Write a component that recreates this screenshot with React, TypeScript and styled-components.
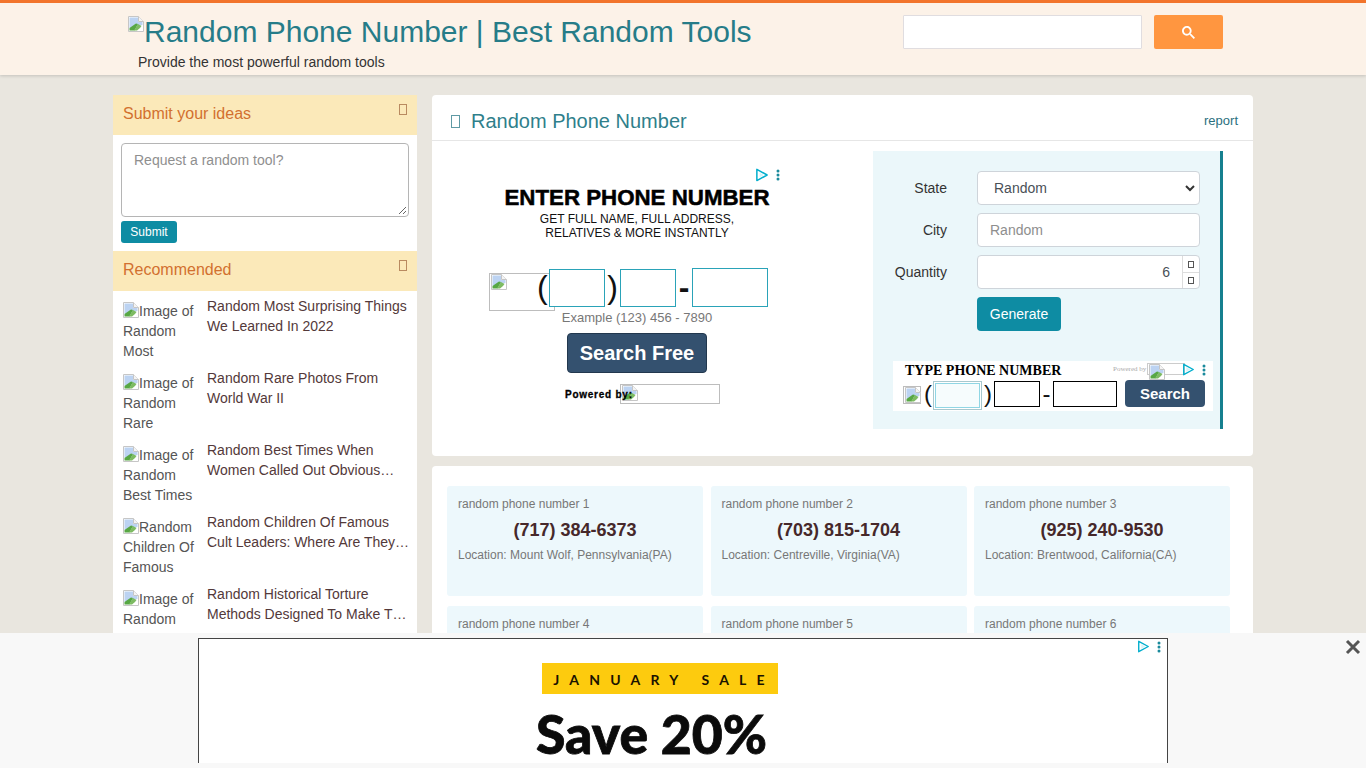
import React from "react";
import styled, { createGlobalStyle } from "styled-components";

const Global = createGlobalStyle`
  html, body { margin: 0; padding: 0; height: 100%; overflow: hidden; }
  body { background: #e9e6df; font-family: "Liberation Sans", Arial, sans-serif; color: #333; font-size: 14px; }
  * { box-sizing: border-box; }
`;

const Page = styled.div`height: 768px; overflow: hidden; position: relative;`;
const Header = styled.header`
  height: 75px; background: #fcf2e8; border-top: 3px solid #f2742b;
  box-shadow: 0 1px 3px rgba(0,0,0,.16);
`;
const HeaderInner = styled.div`
  width: 1140px; margin: 0 auto; padding: 0 30px 0 15px;
  display: flex; justify-content: space-between;
`;
const Brand = styled.div`display: flex; flex-direction: column;`;
const Logo = styled.div`
  display: flex; align-items: flex-start; height: 36px; margin-top: 11px;
  font-size: 30px; line-height: 36px; color: #267c88; white-space: nowrap;
  svg { margin-top: 2px; flex: none; }
`;
const Tagline = styled.div`margin: 2px 0 0 10px; font-size: 14px; line-height: 20px; color: #333;`;
const SearchForm = styled.div`display: flex; gap: 12px; margin-top: 12px;`;
const SearchInput = styled.div`width: 239px; height: 34px; background: #fff; border: 1px solid #e0dde0; border-radius: 1px;`;
const SearchButton = styled.div`
  width: 69px; height: 34px; background: #ff9640; border-radius: 2px;
  display: flex; align-items: center; justify-content: center;
`;
const Layout = styled.div`
  width: 1140px; margin: 20px auto 0; display: flex; gap: 15px; align-items: flex-start;
`;
const Sidebar = styled.aside`width: 304px; background: #fff; flex: none;`;
const SideHead = styled.div`
  height: 40px; background: #fbe9b9; color: #d2702f; font-size: 16px; line-height: 38px;
  padding: 0 10px; display: flex; justify-content: space-between;
`;
const Tofu = styled.span<{ $w: number; $h: number; $c?: string }>`
  display: inline-block; flex: none; width: ${p => p.$w}px; height: ${p => p.$h}px;
  border: 1px solid ${p => p.$c || "#8a8a8a"};
`;
const SideTofu = styled(Tofu)`margin: 9px 0 0 0;`;
const IdeaBox = styled.div`padding: 8px; height: 116px;`;
const IdeaArea = styled.div`
  position: relative; height: 74px; border: 1px solid #b5b5b5; border-radius: 4px;
  padding: 7px 12px; color: #8f8f8f; font-size: 14px; line-height: 18px;
  svg { position: absolute; right: 1px; bottom: 1px; }
`;
const SubmitButton = styled.div`
  width: 56px; height: 22px; margin-top: 4px; background: #0e8ca3; color: #fff; border-radius: 3px;
  font-size: 12px; line-height: 22px; text-align: center;
`;
const RecList = styled.div`padding: 5px 4px 0 10px;`;
const RecItem = styled.div`display: flex; height: 72px; gap: 4px;`;
const RecAlt = styled.div`width: 80px; flex: none; font-size: 14px; line-height: 20px; color: #555; height: 60px; padding-top: 5px; svg { vertical-align: -2px; }`;
const RecTitle = styled.div`font-size: 14px; line-height: 20px; color: #53393a; height: 40px; flex: 1; min-width: 0;`;
const Main = styled.main`flex: 1; display: flex; flex-direction: column; gap: 10px; min-width: 0;`;
const Card = styled.section`background: #fff; border-radius: 4px;`;
const TopCard = styled(Card)`height: 361px;`;
const CardHead = styled.div`
  height: 46px; border-bottom: 1px solid #e6e6e6; padding: 7px 15px 0 19px;
  display: flex; align-items: center; gap: 11px;
`;
const CardTitle = styled.h1`margin: 0; flex: 1; font-size: 20px; font-weight: 400; color: #2f7f8b; line-height: 24px;`;
const Report = styled.span`font-size: 13px; color: #2b6f7e; line-height: 14px;`;
const ToolRow = styled.div`display: flex; height: 278px; margin-top: 10px;`;
const AdLeftWrap = styled.div`width: 441px; flex: none; padding: 16px 0 0 55px;`;
const Ad = styled.div`position: relative; width: 300px; height: 250px; display: flex; flex-direction: column; align-items: center;`;
const AdMark = styled.div<{ $t: number; $r: number }>`
  position: absolute; display: flex; align-items: center; gap: 7px;
  top: ${p => p.$t}px; right: ${p => p.$r}px;
`;
const AdHeading = styled.div`
  margin-top: 19px; font-size: 22.3px; line-height: 24px; font-weight: 700; color: #000; white-space: nowrap;
  -webkit-text-stroke: .5px #000;
`;
const AdSub = styled.div`font-size: 12px; line-height: 14px; color: #111; text-align: center; margin-top: 2px;`;
const PhoneRow = styled.div`
  display: flex; align-items: flex-start; width: 280px; height: 43px; margin-top: 28px; align-self: flex-start; margin-left: 2px;
`;
const BrokenBox = styled.div<{ $w: number; $h: number }>`
  width: ${p => p.$w}px; height: ${p => p.$h}px; border: 1px solid #bdbdbd; flex: none;
  padding: 0 0 0 1px; line-height: 0;
`;
const PhoneBroken = styled(BrokenBox)`margin: 5px -6px 0 0;`;
const Paren = styled.span<{ $w: number }>`font-size: 32px; line-height: 38px; color: #111; width: ${p => p.$w}px; text-align: center; flex: none;`;
const FirstParen = styled(Paren)`margin-left: -12px; text-align: left; position: relative;`;
const Dash = styled(Paren)`font-weight: 700;`;
const PhoneField = styled.div<{ $w: number; $h: number; $t: number }>`
  width: ${p => p.$w}px; height: ${p => p.$h}px; margin-top: ${p => p.$t}px; flex: none;
  border: 1px solid #2aa3b8; background: #fff; position: relative;
`;
const AdExample = styled.div`font-size: 13px; line-height: 14px; color: #777;`;
const AdButton = styled.div`
  width: 140px; height: 40px; margin-top: 8px; background: #34516f; color: #fff; border-radius: 4px;
  border: 1px solid #22384e; font-size: 20px; font-weight: 700; line-height: 39px; text-align: center;
`;
const Powered = styled.div`
  display: flex; align-items: flex-start; height: 20px; margin: 11px 0 0 78px; align-self: flex-start;
  font-size: 10px; font-weight: 700; color: #000; line-height: 21px; white-space: nowrap;
`;
const PoweredText = styled.span`
  width: 55px; flex: none; position: relative; z-index: 1; letter-spacing: .75px; -webkit-text-stroke: .3px #000;
`;
const FormPanel = styled.div`
  width: 350px; background: #ebf7fa; border-right: 3px solid #16808f; padding: 20px 0 0 0;
`;
const FormRow = styled.div`display: flex; align-items: center; gap: 30px; margin-bottom: 8px;`;
const FormLabel = styled.label`width: 74px; text-align: right; font-size: 14px; color: #333; flex: none;`;
const FieldBase = styled.div`
  width: 223px; height: 34px; background: #fff; border: 1px solid #ced4da; border-radius: 4px;
  font-size: 14px; color: #495057; display: flex; align-items: center;
`;
const SelectField = styled(FieldBase)`padding: 0 4px 0 16px; justify-content: space-between;`;
const CityField = styled(FieldBase)`padding: 0 12px; color: #8e8e8e;`;
const QtyField = styled(FieldBase)`justify-content: flex-end; padding-left: 12px;`;
const QtyValue = styled.span`margin-right: 12px;`;
const Spin = styled.div`
  width: 17px; height: 32px; border-left: 1px solid #ddd; display: grid; grid-template-rows: 1fr 1fr;
  > div { display: flex; align-items: center; justify-content: center; }
  > div + div { border-top: 1px solid #ddd; }
`;
const GenerateButton = styled.div`
  margin-left: 104px; width: 84px; height: 34px; border-radius: 4px; background: #0e8ca3; color: #fff;
  font-size: 14px; line-height: 34px; text-align: center;
`;
const SmallAd = styled.div`
  position: relative; margin: 30px 0 0 20px; width: 320px; height: 50px; background: #fff; padding-left: 10px;
`;
const SmallTitle = styled.div`
  font-family: "Liberation Serif", serif; font-weight: 700; font-size: 14px; line-height: 16px; color: #000; padding: 1px 0 0 2px; height: 17px;
  position: relative; top: 1px;
`;
const SmallRow = styled.div`display: flex; align-items: flex-start; margin-top: 3px;`;
const SmallBroken = styled(BrokenBox)`margin-top: 5px; margin-right: 3px;`;
const SmallParen = styled.span<{ $w: number }>`font-size: 24px; line-height: 26px; color: #111; width: ${p => p.$w}px; flex: none; text-align: center;`;
const SmallOpen = styled(SmallParen)`margin-left: -1px;`;
const SmallField = styled.div<{ $w: number; $teal?: boolean }>`
  width: ${p => p.$w}px; height: ${p => p.$teal ? 29 : 26}px; flex: none;
  border: 1px solid ${p => p.$teal ? "#a8c8ce" : "#000"};
  box-shadow: ${p => p.$teal ? "inset 0 0 0 1px #fff, inset 0 0 0 2px #90d6e4" : "none"}; background: ${p => p.$teal ? "#f6fcfd" : "#fff"};
`;
const SmallSearch = styled.div`
  width: 80px; height: 27px; margin: -1px 0 0 8px; background: #34516f; color: #fff; border-radius: 4px; font-size: 15px; font-weight: 700; line-height: 27px; text-align: center;
`;
const SmallPowered = styled.div`
  position: absolute; top: 2px; left: 220px; display: flex; align-items: center; font-family: "Liberation Serif", serif;
  font-size: 7px; color: #aaa; white-space: nowrap; line-height: 12px;
`;
const SmallPoweredBox = styled(BrokenBox)`margin-left: 1px; border-color: #ccc;`;
const ResultCard = styled(Card)`height: 300px; padding: 20px 23px 0 15px;`;
const ResultGrid = styled.div`display: grid; grid-template-columns: repeat(3, 256px); gap: 10px 7.5px;`;
const Result = styled.div`height: 110px; background: #edf8fc; border-radius: 3px; padding: 10px 11px;`;
const ResultLabel = styled.div`font-size: 12px; line-height: 16px; color: #777;`;
const ResultPhone = styled.div`font-size: 18px; line-height: 24px; font-weight: 700; color: #46282a; text-align: center; margin-top: 6px;`;
const ResultLoc = styled.div`font-size: 12px; line-height: 16px; color: #777; margin-top: 5px;`;
const BottomBar = styled.div`
  position: absolute; left: 0; right: 0; bottom: 0; height: 135px; background: #f8f8f8; padding-top: 5px;
  display: flex; justify-content: center;
`;
const BottomAd = styled.div`
  position: relative; width: 970px; height: 125px; background: #fff; overflow: hidden;
  border: 1px solid #444; border-bottom: none; display: flex; flex-direction: column; align-items: center;
`;
const SaleTag = styled.div`
  margin-top: 24px; margin-left: -46px; width: 236px; height: 31px; background: #fdcb0e; color: #1a1200; font-family: Lato, sans-serif; font-weight: 700;
  font-size: 14px; letter-spacing: 10.2px; line-height: 33px; text-align: center; white-space: nowrap; padding-left: 8px;
`;
const SaveText = styled.div`
  margin-top: 9px; margin-left: -63px; font-family: Lato, sans-serif; font-weight: 900; font-size: 53.5px; line-height: 60px; color: #0b0b0b; white-space: nowrap;
  -webkit-text-stroke: .8px #0b0b0b;
`;
const CloseButton = styled.div`position: absolute; top: 6px; right: 5px; line-height: 0;`;

const Broken = () => (
  <svg width="16" height="16" viewBox="0 0 16 16">
    <path d="M.5 .5h10l5 5v10H.5z" fill="#fff" stroke="#c6c6c6" />
    <path d="M1.5 1.5h8.500v4.500h4.500v3L1.500 12z" fill="#bcd3f2" />
    <path d="M1.500 14.500v-2.500l6.500-4.500 2 .5-3.500 6.500z" fill="#57a744" />
    <path d="M6 14.500l4-6.500 3.500 2-1.500 2-3 2.500z" fill="#7dbb62" />
    <path d="M10.500 .5v5h5" fill="#f4f4f4" stroke="#c6c6c6" />
  </svg>
);
const AdChoice = ({ s = 14 }: { s?: number }) => (
  <svg width={s} height={s} viewBox="0 0 15 15" fill="none">
    <path d="M2 1.500v12l11-6z" stroke="#00aecd" strokeWidth="1.600" strokeLinejoin="round" />
    <path d="M5 5v5l4.500-2.500z" fill="#d7f3f8" />
  </svg>
);
const AdDots = () => (
  <svg width="4" height="12" viewBox="0 0 4 12" fill="#1a8a9c">
    <circle cx="2" cy="2" r="1.500" /><circle cx="2" cy="6" r="1.500" /><circle cx="2" cy="10" r="1.500" />
  </svg>
);

const recs = [
  ["Image of Random Most", "Random Most Surprising Things We Learned In 2022"],
  ["Image of Random Rare", "Random Rare Photos From World War II"],
  ["Image of Random Best Times", "Random Best Times When Women Called Out Obvious…"],
  ["Random Children Of Famous", "Random Children Of Famous Cult Leaders: Where Are They…"],
  ["Image of Random Historical", "Random Historical Torture Methods Designed To Make T…"],
];
const results = [
  ["(717) 384-6373", "Mount Wolf, Pennsylvania(PA)"],
  ["(703) 815-1704", "Centreville, Virginia(VA)"],
  ["(925) 240-9530", "Brentwood, California(CA)"],
  ["(312) 555-0148", "Chicago, Illinois(IL)"],
  ["(206) 555-0172", "Seattle, Washington(WA)"],
  ["(305) 555-0119", "Miami, Florida(FL)"],
];

export default function App() {
  return (
    <Page>
      <Global />
      <Header>
        <HeaderInner>
          <Brand>
            <Logo><Broken />Random Phone Number | Best Random Tools</Logo>
            <Tagline>Provide the most powerful random tools</Tagline>
          </Brand>
          <SearchForm>
            <SearchInput />
            <SearchButton>
              <svg width="13" height="13" viewBox="0 0 13 13" fill="#fff">
                <path d="m4.8495 7.8226c0.82666 0 1.5262-0.29146 2.0985-0.87438 0.57232-0.58292 0.86378-1.2877 0.87438-2.1144 0.010599-0.82666-0.28086-1.5262-0.87438-2.0985-0.59352-0.57232-1.293-0.86378-2.0985-0.87438-0.8055-0.010599-1.5103 0.28086-2.1144 0.87438-0.60414 0.59352-0.8956 1.293-0.87438 2.0985 0.021197 0.8055 0.31266 1.5103 0.87438 2.1144 0.56172 0.60414 1.2665 0.8956 2.1144 0.87438zm4.4695 0.2115 3.681 3.6819-1.259 1.284-3.6817-3.7 0.0019784-0.69479-0.090043-0.098846c-0.87973 0.76087-1.92 1.1413-3.1207 1.1413-1.3553 0-2.5025-0.46363-3.4417-1.3909s-1.4088-2.0686-1.4088-3.4239c0-1.3553 0.4696-2.4966 1.4088-3.4239 0.9392-0.92727 2.0864-1.3969 3.4417-1.4088 1.3553-0.011889 2.4906 0.45771 3.406 1.4088 0.9154 0.95107 1.379 2.0924 1.3909 3.4239 0 1.2126-0.38043 2.2588-1.1413 3.1385l0.098834 0.090049z" />
              </svg>
            </SearchButton>
          </SearchForm>
        </HeaderInner>
      </Header>
      <Layout>
        <Sidebar>
          <SideHead>Submit your ideas<SideTofu $w={8} $h={11} $c="#b98a60" /></SideHead>
          <IdeaBox>
            <IdeaArea>
              Request a random tool?
              <svg width="9" height="9" viewBox="0 0 9 9" stroke="#666" fill="none"><path d="M1 8l7-7M5 8l3-3" /></svg>
            </IdeaArea>
            <SubmitButton>Submit</SubmitButton>
          </IdeaBox>
          <SideHead>Recommended<SideTofu $w={8} $h={11} $c="#b98a60" /></SideHead>
          <RecList>
            {recs.map(([alt, title]) => (
              <RecItem key={title}>
                <RecAlt><Broken />{alt}</RecAlt>
                <RecTitle>{title}</RecTitle>
              </RecItem>
            ))}
          </RecList>
        </Sidebar>
        <Main>
          <TopCard>
            <CardHead>
              <Tofu $w={9} $h={13} $c="#5f9aa5" />
              <CardTitle>Random Phone Number</CardTitle>
              <Report>report</Report>
            </CardHead>
            <ToolRow>
              <AdLeftWrap>
                <Ad>
                  <AdMark $t={1} $r={7}><AdChoice /><AdDots /></AdMark>
                  <AdHeading>ENTER PHONE NUMBER</AdHeading>
                  <AdSub>GET FULL NAME, FULL ADDRESS,<br />RELATIVES &amp; MORE INSTANTLY</AdSub>
                  <PhoneRow>
                    <PhoneBroken $w={66} $h={38}><Broken /></PhoneBroken>
                    <FirstParen $w={12}>(</FirstParen>
                    <PhoneField $w={56} $h={38} $t={1} />
                    <Paren $w={15}>)</Paren>
                    <PhoneField $w={56} $h={38} $t={1} />
                    <Dash $w={16}>-</Dash>
                    <PhoneField $w={76} $h={39} $t={0} />
                  </PhoneRow>
                  <AdExample>Example (123) 456 - 7890</AdExample>
                  <AdButton>Search Free</AdButton>
                  <Powered>
                    <PoweredText>Powered by:</PoweredText>
                    <BrokenBox $w={100} $h={20}><Broken /></BrokenBox>
                  </Powered>
                </Ad>
              </AdLeftWrap>
              <FormPanel>
                <FormRow>
                  <FormLabel>State</FormLabel>
                  <SelectField>
                    Random
                    <svg width="10" height="10" viewBox="0 0 10 10" fill="none" stroke="#333" strokeWidth="2"><path d="M1 3l4 4 4-4" /></svg>
                  </SelectField>
                </FormRow>
                <FormRow>
                  <FormLabel>City</FormLabel>
                  <CityField>Random</CityField>
                </FormRow>
                <FormRow>
                  <FormLabel>Quantity</FormLabel>
                  <QtyField>
                    <QtyValue>6</QtyValue>
                    <Spin>
                      <div><Tofu $w={6} $h={7} $c="#555" /></div>
                      <div><Tofu $w={6} $h={7} $c="#555" /></div>
                    </Spin>
                  </QtyField>
                </FormRow>
                <GenerateButton>Generate</GenerateButton>
                <SmallAd>
                  <SmallTitle>TYPE PHONE NUMBER</SmallTitle>
                  <SmallPowered>Powered by<SmallPoweredBox $w={38} $h={12}><Broken /></SmallPoweredBox></SmallPowered>
                  <AdMark $t={2} $r={7}><AdChoice s={13} /><AdDots /></AdMark>
                  <SmallRow>
                    <SmallBroken $w={18} $h={18}><Broken /></SmallBroken>
                    <SmallOpen $w={10}>(</SmallOpen>
                    <SmallField $w={49} $teal />
                    <SmallParen $w={12}>)</SmallParen>
                    <SmallField $w={46} />
                    <SmallParen $w={13}>-</SmallParen>
                    <SmallField $w={64} />
                    <SmallSearch>Search</SmallSearch>
                  </SmallRow>
                </SmallAd>
              </FormPanel>
            </ToolRow>
          </TopCard>
          <ResultCard>
            <ResultGrid>
              {results.map(([phone, loc], i) => (
                <Result key={phone}>
                  <ResultLabel>random phone number {i + 1}</ResultLabel>
                  <ResultPhone>{phone}</ResultPhone>
                  <ResultLoc>Location: {loc}</ResultLoc>
                </Result>
              ))}
            </ResultGrid>
          </ResultCard>
        </Main>
      </Layout>
      <BottomBar>
        <BottomAd>
          <AdMark $t={1} $r={6}><AdChoice s={13} /><AdDots /></AdMark>
          <SaleTag>JANUARY SALE</SaleTag>
          <SaveText>Save 20%</SaveText>
        </BottomAd>
        <CloseButton>
          <svg width="16" height="16" viewBox="0 0 16 16" stroke="#555" strokeWidth="3" fill="none"><path d="M2 2l12 12M14 2L2 14" /></svg>
        </CloseButton>
      </BottomBar>
    </Page>
  );
}
